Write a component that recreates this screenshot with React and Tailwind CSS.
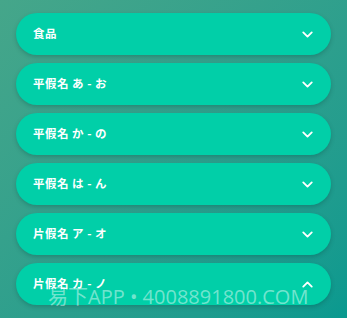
import React from 'react';

const items = [
  { label: '食品', open: false },
  { label: '平假名 あ - お', open: false },
  { label: '平假名 か - の', open: false },
  { label: '平假名 は - ん', open: false },
  { label: '片假名 ア - オ', open: false },
  { label: '片假名 カ - ノ', open: true },
];

const Chevron = ({ up }) => (
  <svg viewBox="0 0 24 24" className="w-[17px] h-[17px]" fill="none" stroke="currentColor" strokeWidth="2.6" strokeLinecap="round" strokeLinejoin="round">
    <path d={up ? 'M6 15l6-6 6 6' : 'M6 9l6 6 6-6'} />
  </svg>
);

export default function App() {
  return (
    <div
      className="relative w-[347px] h-[318px] overflow-hidden bg-gradient-to-br from-[#45a68a] to-[#08998f]"
      style={{ fontFamily: '"Noto Sans CJK JP", "Noto Sans", sans-serif' }}
    >
      <div className="flex flex-col gap-[8px] pt-[13px] px-[16px]">
        {items.map((it) => (
          <div
            key={it.label}
            className="h-[42px] rounded-full bg-[#01cfa8] shadow-[0_2px_4px_rgba(0,60,50,0.25)] flex items-center justify-between pl-[17px] pr-[15px] text-white"
          >
            <span className="text-[11.5px] font-bold tracking-[0.5px]">{it.label}</span>
            <Chevron up={it.open} />
          </div>
        ))}
      </div>
      <div
        className="absolute left-[48px] top-[282px] text-[20px] text-white/45 whitespace-nowrap pointer-events-none"
        style={{ fontFamily: '"Open Sans", "Noto Sans CJK SC", sans-serif' }}
      >
        易下APP • 4008891800.COM
      </div>
    </div>
  );
}
